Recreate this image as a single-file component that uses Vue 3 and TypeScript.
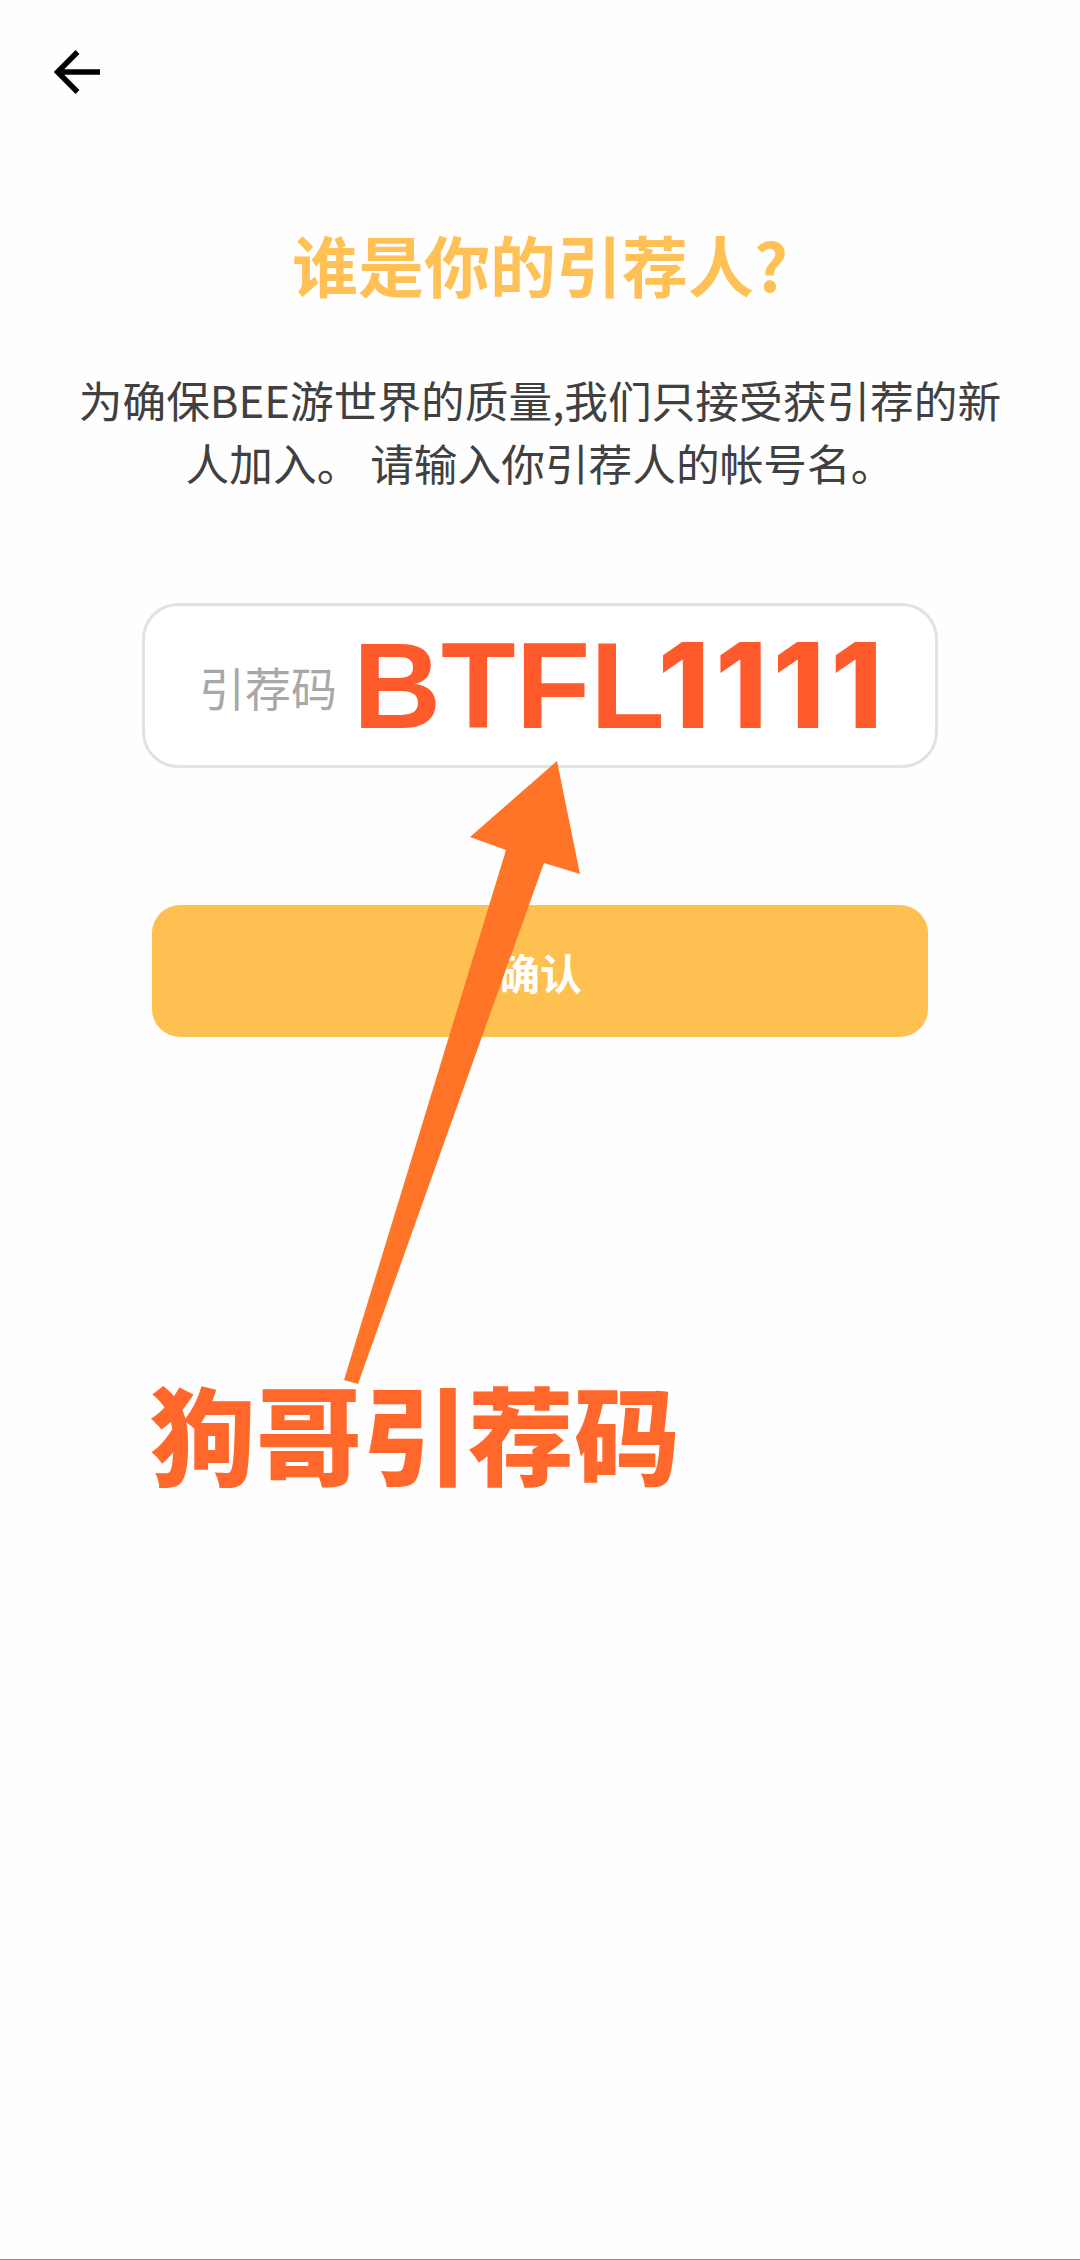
<script setup lang="ts">
const title: string = '谁是你的引荐人?'
const lines: string[] = ['为确保BEE游世界的质量,我们只接受获引荐的新', '人加入。 请输入你引荐人的帐号名。']
</script>

<template>
  <div class="page">
    <header class="top">
      <svg class="back" viewBox="0 0 46 44" fill="none" stroke="#000" stroke-width="5.4">
        <path d="M23.5 2 3.6 22l19.9 20" />
        <path d="M3.6 22H46" />
      </svg>
    </header>

    <h1 class="title">{{ title }}</h1>

    <p class="intro">
      <span v-for="line in lines" :key="line" class="intro-line">{{ line }}</span>
    </p>

    <div class="field">
      <span class="placeholder">引荐码</span>
      <span class="code"><span class="code-letters">BTFL</span><span class="code-digits">1111</span></span>
    </div>

    <button class="confirm" type="button">确认</button>

    <svg class="pointer" viewBox="0 0 1080 2260">
      <polygon points="557,761 470,837 506,850 344,1380 358,1384 544,863 580,874" fill="#ff7426" />
    </svg>
    <div class="note">狗哥引荐码</div>
    <div class="edge"></div>
  </div>
</template>

<style>
html, body { margin: 0; background: #fefefe; }
</style>

<style scoped>
.page {
  position: relative;
  width: 1080px;
  height: 2260px;
  overflow: hidden;
  background: #fefefe;
  display: flex;
  flex-direction: column;
  align-items: center;
  font-family: "Noto Sans CJK SC", "Noto Sans", sans-serif;
}
.top {
  align-self: stretch;
  height: 120px;
  padding: 50px 0 0 54px;
  box-sizing: border-box;
}
.back { display: block; width: 46px; height: 44px; }
.title {
  margin: 93px 0 0;
  font-size: 66px;
  line-height: 100px;
  font-weight: 700;
  color: #ffc155;
  text-align: center;
}
.intro {
  margin: 55px 0 0;
  font-size: 43.7px;
  line-height: 63px;
  color: #404040;
  text-align: center;
}
.intro-line { display: block; white-space: pre; }
.field {
  margin-top: 109px;
  width: 796px;
  height: 165px;
  box-sizing: border-box;
  border: 3px solid #e2e2e2;
  border-radius: 36px;
  background: #fff;
  display: flex;
  align-items: center;
  padding-left: 54px;
  gap: 16px;
}
.placeholder { font-size: 46px; color: #a8a8a8; }
.code {
  font-family: "Liberation Sans", Arial, sans-serif;
  font-weight: 700;
  font-size: 122px;
  line-height: 1;
  color: #ff5a2c;
  white-space: nowrap;
}
.code-digits {
  margin-left: -7px;
  font-family: Inter, "Liberation Sans", sans-serif;
  font-size: 118px;
  font-weight: 800;
  letter-spacing: 5.5px;
}
.confirm {
  margin-top: 137px;
  width: 776px;
  height: 132px;
  border: 0;
  border-radius: 28px;
  background: #ffc052;
  color: #fff;
  font-family: inherit;
  font-size: 42px;
  font-weight: 700;
}
.pointer {
  position: absolute;
  left: 0;
  top: 0;
  width: 1080px;
  height: 2260px;
  pointer-events: none;
}
.note {
  position: absolute;
  left: 150px;
  top: 1366px;
  font-size: 106px;
  line-height: 130px;
  font-weight: 900;
  color: #ff672b;
}
.edge {
  position: absolute;
  left: 0;
  right: 0;
  bottom: 0;
  height: 1px;
  background: #8a8a8a;
}
</style>
